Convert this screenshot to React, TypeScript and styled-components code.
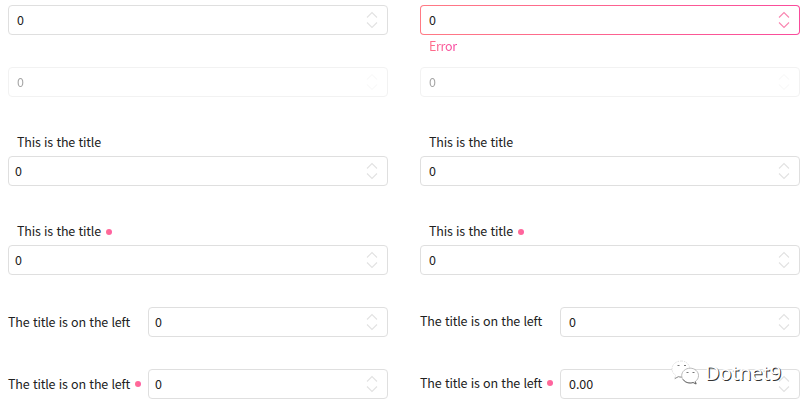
import React from "react";
import styled, { createGlobalStyle } from "styled-components";

const GlobalStyle = createGlobalStyle`
  * { box-sizing: border-box; }
  body { margin: 0; background: #fff; overflow: hidden; }
`;

const Page = styled.main`
  position: relative;
  width: 807px;
  height: 406px;
  padding: 5px 7px 0 8px;
  display: grid;
  grid-template-columns: 380px 380px;
  column-gap: 32px;
  row-gap: 32px;
  align-content: start;
  color: #212121;
  font: 12.5px/20px "Noto Sans CJK SC", "Noto Sans", sans-serif;
  letter-spacing: -0.02px;
`;

const Field = styled.div<{ $side?: boolean; $disabled?: boolean }>`
  position: relative;
  display: flex;
  flex-direction: ${(p) => (p.$side ? "row" : "column")};
  opacity: ${(p) => (p.$disabled ? 0.4 : 1)};
`;

const Title = styled.div<{ $side?: boolean; $raise?: boolean }>`
  display: flex;
  align-items: center;
  gap: 5px;
  white-space: nowrap;
  letter-spacing: -0.18px;
  word-spacing: 0.8px;
  width: ${(p) => (p.$side ? "140px" : "auto")};
  height: ${(p) => (p.$side ? "30px" : "27px")};
  padding-left: ${(p) => (p.$side ? 0 : "9px")};
  padding-bottom: ${(p) => (p.$raise ? "2px" : 0)};
`;

const TitleText = styled.span<{ $side?: boolean }>`
  padding-bottom: ${(p) => (p.$side ? 0 : "2px")};
`;

const Dot = styled.span`
  width: 6px;
  height: 6px;
  border-radius: 50%;
  background: linear-gradient(90deg, #ff6f93, #ff5fa2);
`;

const Box = styled.div<{ $tight?: boolean; $error?: boolean }>`
  flex: 1 0 auto;
  height: 30px;
  display: flex;
  align-items: center;
  justify-content: space-between;
  padding: 0 9px 0 ${(p) => (p.$tight ? "6px" : "8px")};
  border: 1px solid ${(p) => (p.$error ? "transparent" : "#dfdfdf")};
  border-radius: 4px;
  background: ${(p) =>
    p.$error
      ? "linear-gradient(#fff, #fff) padding-box, linear-gradient(90deg, #ff7a84, #fa4b9c) border-box"
      : "#fff"};
`;

const ErrorText = styled.span`
  position: absolute;
  top: 31px;
  left: 9px;
  letter-spacing: -0.3px;
  color: transparent;
  background: linear-gradient(90deg, #ff7186, #f640a2);
  background-clip: text;
`;

const Watermark = styled.div`
  position: absolute;
  left: 671px;
  top: 359px;
  display: flex;
  align-items: center;
  gap: 5px;
  color: #fff;
  font: 20px/28px "Noto Sans", sans-serif;
  letter-spacing: 0;
  word-spacing: 0;
  text-shadow: 1px 1px 0.6px #333;
`;

const ChatLogo = styled.svg`
  display: block;
`;

function Spinner({ color }: { color: string }) {
  return (
    <svg width="12" height="18" viewBox="0 0 12 18" fill="none" stroke={color} strokeWidth="1.1">
      <path d="M1 6.500 6 1.500l5 5M1 11.500l5 5 5-5" />
    </svg>
  );
}

interface FieldData {
  value?: string;
  title?: string;
  side?: boolean;
  required?: boolean;
  tight?: boolean;
  disabled?: boolean;
  raise?: boolean;
  error?: string;
}

function NumericField({ value = "0", title, side, required, tight, disabled, raise, error }: FieldData) {
  const arrowColor = error ? "#f985b0" : disabled ? "#f3f3f3" : "#e2e2e2";
  return (
    <Field $side={side} $disabled={disabled}>
      {title && (
        <Title $side={side} $raise={raise}>
          <TitleText $side={side}>{title}</TitleText>
          {required && <Dot />}
        </Title>
      )}
      <Box $tight={tight} $error={!!error}>
        <span>{value}</span>
        <Spinner color={arrowColor} />
      </Box>
      {error && <ErrorText>{error}</ErrorText>}
    </Field>
  );
}

const above = "This is the title";
const left = "The title is on the left";

const fields: FieldData[] = [
  {},
  { error: "Error" },
  { disabled: true },
  { disabled: true },
  { title: above, tight: true },
  { title: above },
  { title: above, tight: true, required: true },
  { title: above, required: true },
  { title: left, side: true, tight: true },
  { title: left, side: true, raise: true },
  { title: left, side: true, tight: true, required: true },
  { title: left, side: true, raise: true, required: true, value: "0.00" },
];

export default function App() {
  return (
    <Page>
      <GlobalStyle />
      {fields.map((field, i) => (
        <NumericField key={i} {...field} />
      ))}
      <Watermark>
        <ChatLogo width="29" height="26" viewBox="0 0 29 26">
          <path
            fill="#fff"
            stroke="#d2d2d2"
            strokeWidth=".7"
            strokeDasharray="1.500 1"
            d="M10.500 1C5 1 1 4.500 1 9c0 2.700 1.400 4.800 3.600 6.300L3.700 18.500l3.700-2c1.200.4 2.300.5 3.900.4L19 9c-.5-4.500-4-8-8.500-8Z"
          />
          <path fill="none" stroke="#777" strokeWidth=".8" d="m3.700 18.700 3.700-2c1.200.4 2.300.5 3.900.4" />
          <path
            fill="#fff"
            stroke="#aaa"
            strokeWidth=".8"
            d="M19.200 8.200c-4.700 0-8.500 3.300-8.500 7.400s3.800 7.400 8.500 7.400c1 0 2-.2 2.900-.5l3 1.500-.8-2.500c2-1.500 3.200-3.400 3.200-5.900 0-4.100-3.700-7.400-8.300-7.400Z"
          />
          <path
            fill="none"
            stroke="#555"
            strokeWidth=".8"
            d="M12 19.300c1.500 2.500 4 3.700 7.200 3.700 1 0 2-.2 2.900-.5l3 1.500-.8-2.500"
          />
          <path stroke="#777" d="M6.500 5.500h2M13 5.500h2M15.500 12.500h2M21.500 12.500h2" />
        </ChatLogo>
        <span>Dotnet9</span>
      </Watermark>
    </Page>
  );
}
